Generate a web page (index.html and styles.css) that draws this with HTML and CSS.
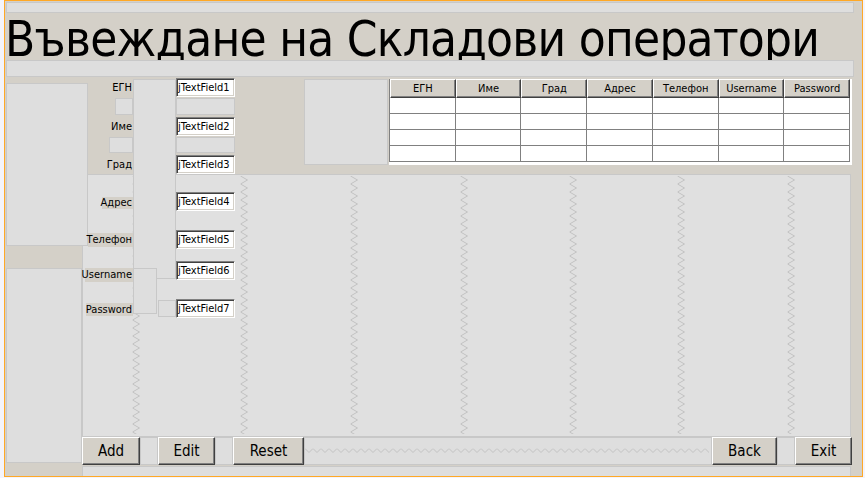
FILE: index.html
```html
<!DOCTYPE html>
<html lang="bg">
<head>
<meta charset="utf-8">
<title>Въвеждане на Складови оператори</title>
<link rel="stylesheet" href="styles.css">
</head>
<body>
<div class="frame">
  <div class="band band-top"></div>
  <h1 class="title">Въвеждане на Складови оператори</h1>
  <div class="band band-mid"></div>
  <div class="content">
    <div class="gap area">
      <svg class="zig" width="767" height="261" viewBox="0 0 767 261" aria-hidden="true">
        <defs>
          <pattern id="zv" width="8" height="8" patternUnits="userSpaceOnUse">
            <path d="M0.5 0 L7.5 4 L0.5 8" fill="none" stroke="#c2c2c2" stroke-width="1"/>
          </pattern>
        </defs>
        <g transform="translate(49 1)"><rect width="8" height="258" fill="url(#zv)"/></g>
        <g transform="translate(157 1)"><rect width="8" height="258" fill="url(#zv)"/></g>
        <g transform="translate(267 1)"><rect width="8" height="258" fill="url(#zv)"/></g>
        <g transform="translate(377 1)"><rect width="8" height="258" fill="url(#zv)"/></g>
        <g transform="translate(486 1)"><rect width="8" height="258" fill="url(#zv)"/></g>
        <g transform="translate(594 1)"><rect width="8" height="258" fill="url(#zv)"/></g>
        <g transform="translate(704 1)"><rect width="8" height="258" fill="url(#zv)"/></g>
      </svg>
    </div>
    <div class="gap left1"></div>
    <div class="gap left2"></div>
    <div class="gap col"></div>
    <div class="gap ugap"></div>
    <div class="gap pgap"></div>
    <div class="gap lg1"></div>
    <div class="gap lg2"></div>
    <div class="gap fg1"></div>
    <div class="gap fg2"></div>
    <div class="gap side"></div>

    <div class="lbl l-egn">ЕГН</div>
    <div class="lbl l-ime">Име</div>
    <div class="lbl l-grad">Град</div>
    <div class="lbl dark l-adres">Адрес</div>
    <div class="lbl dark l-tel">Телефон</div>
    <div class="lbl dark l-user">Username</div>
    <div class="lbl dark l-pass">Password</div>

    <div class="field f1">jTextField1</div>
    <div class="field f2">jTextField2</div>
    <div class="field f3">jTextField3</div>
    <div class="field f4">jTextField4</div>
    <div class="field f5">jTextField5</div>
    <div class="field f6">jTextField6</div>
    <div class="field f7">jTextField7</div>

    <div class="table-wrap">
      <table class="grid-table">
        <thead>
          <tr><th>ЕГН</th><th>Име</th><th>Град</th><th>Адрес</th><th>Телефон</th><th>Username</th><th>Password</th></tr>
        </thead>
        <tbody>
          <tr><td></td><td></td><td></td><td></td><td></td><td></td><td></td></tr>
          <tr><td></td><td></td><td></td><td></td><td></td><td></td><td></td></tr>
          <tr><td></td><td></td><td></td><td></td><td></td><td></td><td></td></tr>
          <tr><td></td><td></td><td></td><td></td><td></td><td></td><td></td></tr>
        </tbody>
      </table>
    </div>

    <div class="btn b-add">Add</div>
    <div class="gap bg1"></div>
    <div class="btn b-edit">Edit</div>
    <div class="gap bg2"></div>
    <div class="btn b-reset">Reset</div>
    <div class="gap zband">
      <svg class="zigh" width="406" height="26" viewBox="0 0 406 26" aria-hidden="true">
        <defs>
          <pattern id="zh" width="8" height="6" patternUnits="userSpaceOnUse">
            <path d="M0 0.5 L4 4.5 L8 0.5" fill="none" stroke="#c2c2c2" stroke-width="1"/>
          </pattern>
        </defs>
        <g transform="translate(0 10)"><rect width="404" height="6" fill="url(#zh)"/></g>
      </svg>
    </div>
    <div class="btn b-back">Back</div>
    <div class="gap bg3"></div>
    <div class="btn b-exit">Exit</div>
    <div class="gap bottom"></div>
  </div>
</div>
</body>
</html>
```

FILE: styles.css
```css
* { box-sizing: border-box; }

html, body {
  margin: 0;
  padding: 0;
  background: #f4f4fb;
}

body {
  font-family: "DejaVu Sans Condensed", "DejaVu Sans", sans-serif;
  font-size: 11px;
  color: #000;
}

.frame {
  margin-left: 4px;
  width: 859px;
  height: 477px;
  border: 1px solid #ffa826;
  background: #d4d0c8;
  display: flex;
  flex-direction: column;
}

.band {
  margin-left: 1px;
  width: 848px;
  background: #dedede;
  border: 1px solid #c8c8c8;
  flex: none;
}

.band-top {
  margin-top: 1px;
  height: 11px;
}

.band-mid {
  height: 17px;
}

.title {
  flex: none;
  margin: 0;
  height: 47px;
  padding: 3px 0 0 0;
  font-family: "DejaVu Sans Condensed", "DejaVu Sans", sans-serif;
  font-weight: normal;
  font-size: 49px;
  letter-spacing: -0.75px;
  line-height: 47px;
  white-space: nowrap;
}

.content {
  flex: none;
  height: 399px;
  display: grid;
  grid-template-columns:
    [x5] 1px [x6] 74px [x80] 2px [x82] 3px [x85] 1px [x86] 2px [x88] 14px [x102] 7px [x109] 6px [x115] 18px
    [x133] 7px [x140] 17px [x157] 1px [x158] 18px [x176] 39px [x215] 18px [x233] 2px [x235] 69px [x304] 84px
    [x388] 1px [x389] 323px [x712] 65px [x777] 18px [x795] 56px [x851] 1px [x852] 10px [x862];
  grid-template-rows:
    [y77] 1px [y78] 1px [y79] 4px [y83] 14px [y97] 1px [y98] 17px [y115] 2px [y117] 19px [y136] 1px [y137] 16px
    [y153] 2px [y155] 10px [y165] 9px [y174] 18px [y192] 5px [y197] 12px [y209] 2px [y211] 19px [y230] 3px
    [y233] 13px [y246] 1px [y247] 2px [y249] 12px [y261] 7px [y268] 11px [y279] 1px [y280] 2px [y282] 17px
    [y299] 1px [y300] 3px [y303] 11px [y314] 2px [y316] 1px [y317] 1px [y318] 119px [y437] 26px [y463] 2px
    [y465] 1px [y466] 10px [y476];
}

.gap {
  background: #dedede;
  border: 1px solid #c8c8c8;
}

.area  { grid-area: y174 / x82 / y437 / x851; background: #e0e0e0; overflow: hidden; }
.zig   { display: block; }
.left1 { grid-area: y83 / x6 / y246 / x88; }
.left2 { grid-area: y268 / x6 / y463 / x82; }
.col   { grid-area: y79 / x133 / y279 / x176; }
.ugap  { grid-area: y268 / x133 / y314 / x157; }
.pgap  { grid-area: y300 / x158 / y317 / x176; }
.lg1   { grid-area: y98 / x115 / y115 / x133; }
.lg2   { grid-area: y137 / x109 / y153 / x133; }
.fg1   { grid-area: y98 / x176 / y115 / x235; }
.fg2   { grid-area: y137 / x176 / y153 / x235; }
.side  { grid-area: y79 / x304 / y165 / x388; }

.lbl {
  display: flex;
  align-items: center;
  justify-content: flex-end;
  white-space: nowrap;
  line-height: 12px;
  padding-right: 1px;
}
.lbl.dark { background: #d4d0c8; }

.l-egn   { grid-area: y78 / x88 / y97 / x133; }
.l-ime   { grid-area: y117 / x88 / y136 / x133; }
.l-grad  { grid-area: y155 / x88 / y174 / x133; }
.l-adres { grid-area: y197 / x102 / y209 / x133; }
.l-tel   { grid-area: y233 / x88 / y247 / x133; }
.l-user  { grid-area: y268 / x85 / y282 / x133; }
.l-pass  { grid-area: y303 / x86 / y316 / x133; }

.field {
  background: #fff;
  border: 1px solid;
  border-color: #808080 #ffffff #ffffff #808080;
  box-shadow: inset 1px 1px 0 #404040, inset -1px -1px 0 #d4d0c8;
  padding-left: 1px;
  display: flex;
  align-items: center;
  white-space: nowrap;
  overflow: hidden;
}

.f1 { grid-area: y78 / x176 / y97 / x235; }
.f2 { grid-area: y117 / x176 / y136 / x235; }
.f3 { grid-area: y155 / x176 / y174 / x235; }
.f4 { grid-area: y192 / x176 / y211 / x235; }
.f5 { grid-area: y230 / x176 / y249 / x235; }
.f6 { grid-area: y261 / x176 / y280 / x235; }
.f7 { grid-area: y299 / x176 / y318 / x235; }

.table-wrap {
  grid-area: y79 / x389 / y165 / x852;
  background: #fff;
}

.grid-table {
  border-collapse: separate;
  border-spacing: 0;
  table-layout: fixed;
  width: 461px;
  border-left: 1px solid #808080;
}

.grid-table th {
  height: 19px;
  padding: 0;
  background: #d4d0c8;
  font-weight: normal;
  text-align: center;
  border-top: 1px solid #fff;
  border-left: 1px solid #fff;
  border-right: 1px solid #404040;
  border-bottom: 1px solid #404040;
  box-shadow: inset -1px -1px 0 #808080;
  line-height: 14px;
}

.grid-table td {
  height: 16px;
  padding: 0;
  border-right: 1px solid #808080;
  border-bottom: 1px solid #808080;
}

.btn {
  background: #d4d0c8;
  border: 1px solid;
  border-color: #ffffff #404040 #404040 #ffffff;
  box-shadow: inset -1px -1px 0 #808080;
  display: flex;
  align-items: center;
  justify-content: center;
  font-size: 15px;
  padding-bottom: 1px;
}

.b-add   { grid-area: y437 / x82 / y465 / x140; }
.bg1     { grid-area: y437 / x140 / y465 / x158; }
.b-edit  { grid-area: y437 / x158 / y465 / x215; }
.bg2     { grid-area: y437 / x215 / y465 / x233; }
.b-reset { grid-area: y437 / x233 / y465 / x304; }
.zband   { grid-area: y437 / x304 / y465 / x712; overflow: hidden; }
.zigh    { display: block; }
.b-back  { grid-area: y437 / x712 / y465 / x777; }
.bg3     { grid-area: y437 / x777 / y465 / x795; }
.b-exit  { grid-area: y437 / x795 / y465 / x852; }
.bottom  { grid-area: y466 / x82 / y476 / x851; border-bottom: none; }
```
